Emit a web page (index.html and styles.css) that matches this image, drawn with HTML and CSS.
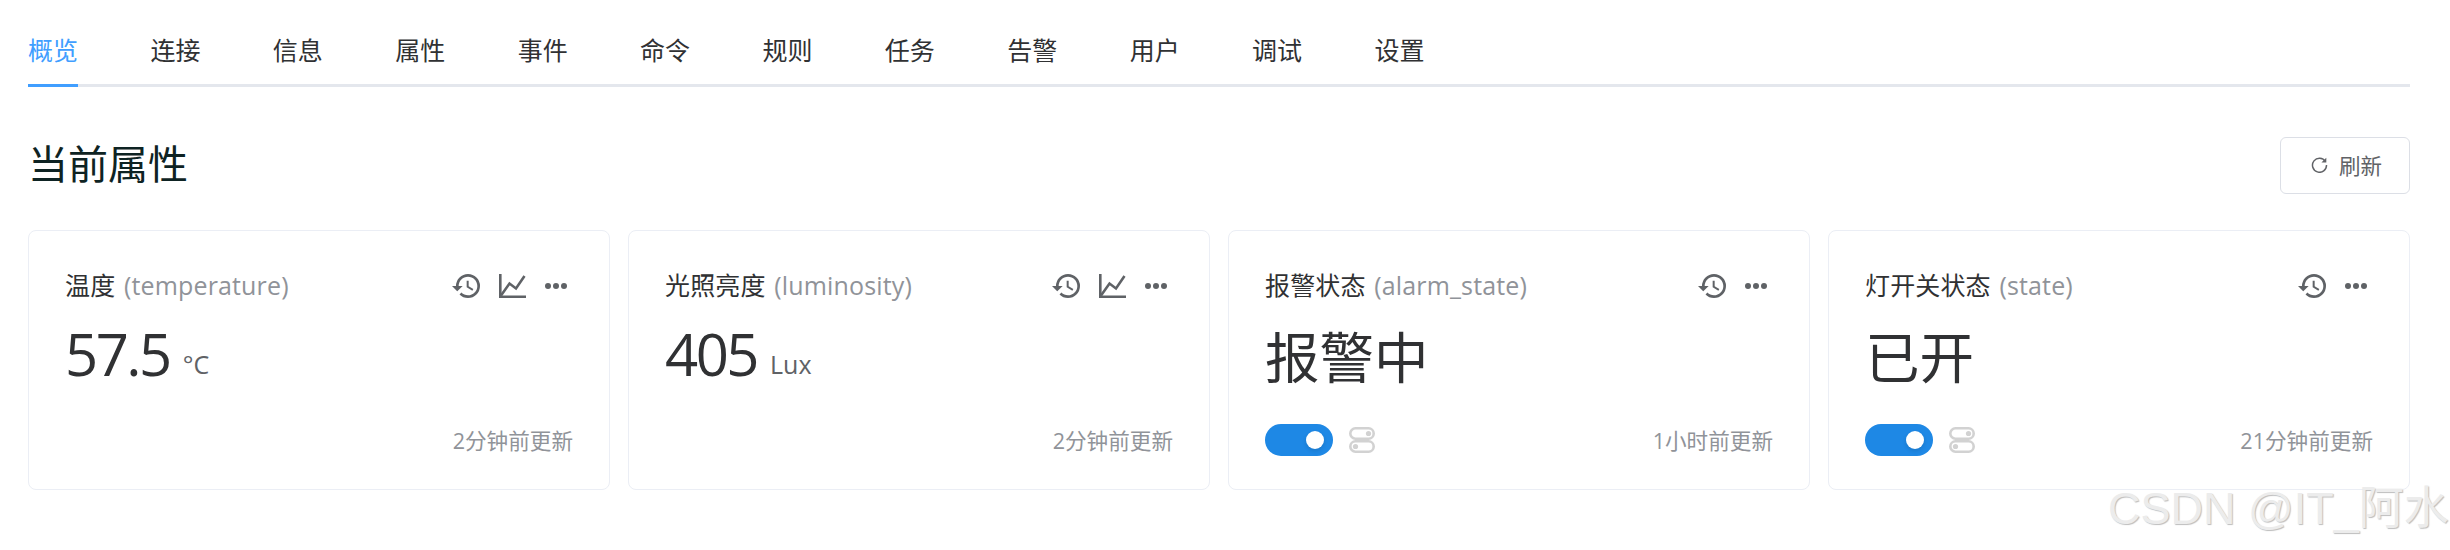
FILE: index.html
```html
<!DOCTYPE html>
<html lang="zh-CN">
<head>
  <meta charset="UTF-8" />
  <meta name="viewport" content="width=device-width, initial-scale=1.0" />
  <title>当前属性</title>
  <link rel="stylesheet" href="styles.css">
</head>
<body>
  <div class="page">
    <div class="tabs">
      <div class="tab active">概览</div>
      <div class="tab">连接</div>
      <div class="tab">信息</div>
      <div class="tab">属性</div>
      <div class="tab">事件</div>
      <div class="tab">命令</div>
      <div class="tab">规则</div>
      <div class="tab">任务</div>
      <div class="tab">告警</div>
      <div class="tab">用户</div>
      <div class="tab">调试</div>
      <div class="tab">设置</div>
    </div>

    <div class="section-head">
      <h2>当前属性</h2>
      <button class="refresh">
        <svg class="refresh-icon" viewBox="0 0 16 16"><path d="M13.6 5.2A6.6 6.6 0 1 0 14.6 8.5" /><path class="fill" d="M14.4 1.6v4.6H9.8z" /></svg>
        <span class="refresh-label">刷新</span>
      </button>
    </div>

    <div class="cards">
      <div class="card">
        <div class="card-head">
          <div class="card-title">温度 <span class="key">(temperature)</span></div>
          <div class="actions">
            <svg class="icon-history" viewBox="1 3 21 18"><path d="M13 3a9 9 0 0 0-9 9H1l3.89 3.89.07.14L9 12H6c0-3.87 3.13-7 7-7s7 3.13 7 7-3.13 7-7 7c-1.93 0-3.68-.79-4.94-2.06l-1.42 1.42A8.954 8.954 0 0 0 13 21a9 9 0 0 0 0-18zm-1 5v5l4.28 2.54.72-1.21-3.5-2.08V8H12z" /></svg>
            <svg class="icon-chart" viewBox="0 0 27 24"><path d="M1.3 0v22.7H27" /><path d="M2 21.5 10.5 9.5l6.5 5L25.5 2" /></svg>
            <svg class="icon-more" viewBox="0 0 22 6"><circle cx="3" cy="3" r="3" /><circle cx="11" cy="3" r="3" /><circle cx="19" cy="3" r="3" /></svg>
          </div>
        </div>
        <div class="value"><span class="num">57.5</span><span class="unit">°C</span></div>
        <div class="card-foot">
          <div></div>
          <div class="updated">2分钟前更新</div>
        </div>
      </div>

      <div class="card">
        <div class="card-head">
          <div class="card-title">光照亮度 <span class="key">(luminosity)</span></div>
          <div class="actions">
            <svg class="icon-history" viewBox="1 3 21 18"><path d="M13 3a9 9 0 0 0-9 9H1l3.89 3.89.07.14L9 12H6c0-3.87 3.13-7 7-7s7 3.13 7 7-3.13 7-7 7c-1.93 0-3.68-.79-4.94-2.06l-1.42 1.42A8.954 8.954 0 0 0 13 21a9 9 0 0 0 0-18zm-1 5v5l4.28 2.54.72-1.21-3.5-2.08V8H12z" /></svg>
            <svg class="icon-chart" viewBox="0 0 27 24"><path d="M1.3 0v22.7H27" /><path d="M2 21.5 10.5 9.5l6.5 5L25.5 2" /></svg>
            <svg class="icon-more" viewBox="0 0 22 6"><circle cx="3" cy="3" r="3" /><circle cx="11" cy="3" r="3" /><circle cx="19" cy="3" r="3" /></svg>
          </div>
        </div>
        <div class="value"><span class="num">405</span><span class="unit">Lux</span></div>
        <div class="card-foot">
          <div></div>
          <div class="updated">2分钟前更新</div>
        </div>
      </div>

      <div class="card">
        <div class="card-head">
          <div class="card-title">报警状态 <span class="key">(alarm_state)</span></div>
          <div class="actions">
            <svg class="icon-history" viewBox="1 3 21 18"><path d="M13 3a9 9 0 0 0-9 9H1l3.89 3.89.07.14L9 12H6c0-3.87 3.13-7 7-7s7 3.13 7 7-3.13 7-7 7c-1.93 0-3.68-.79-4.94-2.06l-1.42 1.42A8.954 8.954 0 0 0 13 21a9 9 0 0 0 0-18zm-1 5v5l4.28 2.54.72-1.21-3.5-2.08V8H12z" /></svg>
            <svg class="icon-more" viewBox="0 0 22 6"><circle cx="3" cy="3" r="3" /><circle cx="11" cy="3" r="3" /><circle cx="19" cy="3" r="3" /></svg>
          </div>
        </div>
        <div class="value text">报警中</div>
        <div class="card-foot">
          <div class="controls">
            <div class="switch"><span class="knob"></span></div>
            <svg class="icon-switches" viewBox="0 0 26 26"><rect x="1.3" y="1.3" width="23.4" height="10.4" rx="5.2" /><rect x="1.3" y="14.3" width="23.4" height="10.4" rx="5.2" /><circle class="fill" cx="19.5" cy="6.5" r="2.6" /><circle class="fill" cx="6.5" cy="19.5" r="2.6" /></svg>
          </div>
          <div class="updated">1小时前更新</div>
        </div>
      </div>

      <div class="card">
        <div class="card-head">
          <div class="card-title">灯开关状态 <span class="key">(state)</span></div>
          <div class="actions">
            <svg class="icon-history" viewBox="1 3 21 18"><path d="M13 3a9 9 0 0 0-9 9H1l3.89 3.89.07.14L9 12H6c0-3.87 3.13-7 7-7s7 3.13 7 7-3.13 7-7 7c-1.93 0-3.68-.79-4.94-2.06l-1.42 1.42A8.954 8.954 0 0 0 13 21a9 9 0 0 0 0-18zm-1 5v5l4.28 2.54.72-1.21-3.5-2.08V8H12z" /></svg>
            <svg class="icon-more" viewBox="0 0 22 6"><circle cx="3" cy="3" r="3" /><circle cx="11" cy="3" r="3" /><circle cx="19" cy="3" r="3" /></svg>
          </div>
        </div>
        <div class="value text">已开</div>
        <div class="card-foot">
          <div class="controls">
            <div class="switch"><span class="knob"></span></div>
            <svg class="icon-switches" viewBox="0 0 26 26"><rect x="1.3" y="1.3" width="23.4" height="10.4" rx="5.2" /><rect x="1.3" y="14.3" width="23.4" height="10.4" rx="5.2" /><circle class="fill" cx="19.5" cy="6.5" r="2.6" /><circle class="fill" cx="6.5" cy="19.5" r="2.6" /></svg>
          </div>
          <div class="updated">21分钟前更新</div>
        </div>
      </div>
    </div>
  </div>

  <div class="watermark">CSDN @IT_阿水</div>
</body>
</html>
```

FILE: styles.css
```css
* {
  box-sizing: border-box;
}
html, body {
  height: 100%;
}
body {
  font-family: "Open Sans", "Noto Sans CJK SC", sans-serif;
  margin: 0;
  padding: 0;
  background: #ffffff;
  color: #303133;
  overflow: hidden;
  position: relative;
}
.page {
  padding: 0 40px 0 28px;
}

/* tabs */
.tabs {
  display: flex;
  gap: 72.4px;
  border-bottom: 3px solid #e4e7ed;
}
.tab {
  font-size: 25px;
  line-height: 34px;
  padding: 33px 0 17px;
  margin-bottom: -3px;
  border-bottom: 3px solid transparent;
  height: 87px;
  color: #303133;
}
.tab.active {
  color: #409eff;
  border-bottom-color: #409eff;
}

/* heading row */
.section-head {
  display: flex;
  align-items: center;
  justify-content: space-between;
  margin-top: 50px;
  height: 57px;
}
h2 {
  margin: 0 0 7px;
  font-size: 40px;
  font-weight: 400;
  color: #0e2323;
}
.refresh {
  display: flex;
  align-items: center;
  justify-content: center;
  gap: 11px;
  width: 130px;
  height: 57px;
  padding: 0 0 2px 3px;
  background: #ffffff;
  border: 1px solid #dcdfe6;
  border-radius: 6px;
  font-family: inherit;
  font-size: 21.5px;
  color: #606266;
}
.refresh-icon {
  width: 17px;
  height: 17px;
  fill: none;
  stroke: #606266;
  stroke-width: 1.4;
}
.refresh-icon .fill {
  fill: #606266;
  stroke: none;
}

/* cards */
.cards {
  display: grid;
  grid-template-columns: repeat(4, 582px);
  gap: 18px;
  margin-top: 36px;
}
.card {
  display: flex;
  flex-direction: column;
  height: 260px;
  padding: 33px 36px 33px;
  border: 1px solid #ebeef5;
  border-radius: 8px;
  background: #ffffff;
}
.card-head {
  display: flex;
  align-items: center;
  justify-content: space-between;
  height: 40px;
}
.card-title {
  font-size: 25px;
  word-spacing: 2px;
  letter-spacing: 0.15px;
  color: #303133;
}
.key {
  color: #909399;
}
.actions {
  display: flex;
  align-items: center;
  gap: 19px;
  margin-top: 4px;
  margin-right: 6px;
}
.actions svg {
  fill: #5f6266;
}
.icon-history {
  width: 28px;
  height: 24px;
}
.icon-chart {
  width: 27px;
  height: 24px;
  fill: none !important;
  stroke: #5f6266;
  stroke-width: 2.6;
}
.icon-more {
  width: 22px;
  height: 6px;
}
.value {
  margin-top: 10px;
  font-size: 58px;
  line-height: 80px;
  color: #303133;
}
.num {
  letter-spacing: -2.5px;
}
.value.text {
  margin-top: 13px;
  font-size: 54.5px;
}
.unit {
  margin-left: 13px;
  font-size: 25px;
  color: #606266;
  position: relative;
  top: -2px;
}
.card-foot {
  display: flex;
  align-items: center;
  justify-content: space-between;
  margin-top: auto;
  height: 32px;
}
.controls {
  display: flex;
  align-items: center;
  gap: 16px;
}
.switch {
  display: flex;
  align-items: center;
  justify-content: flex-end;
  width: 68px;
  height: 32px;
  padding-right: 9px;
  border-radius: 16px;
  background: #1e88e5;
}
.knob {
  width: 18px;
  height: 18px;
  border-radius: 50%;
  background: #ffffff;
  box-shadow: 0 2px 4px rgba(0, 0, 0, 0.12);
}
.icon-switches {
  width: 26px;
  height: 26px;
  fill: none;
  stroke: #d2d2d2;
  stroke-width: 2.6;
}
.icon-switches .fill {
  fill: #d2d2d2;
  stroke: none;
}
.updated {
  font-size: 21.6px;
  margin-bottom: 2px;
  color: #909399;
}

/* image watermark lies over the page corner */
.watermark {
  position: absolute;
  left: 2108px;
  top: 484px;
  font-family: "Liberation Sans", "Noto Sans CJK SC", sans-serif;
  font-size: 45px;
  line-height: 50px;
  white-space: nowrap;
  color: #ececec;
  text-shadow: 1px 1px 1px #bdbdbd;
}
```
